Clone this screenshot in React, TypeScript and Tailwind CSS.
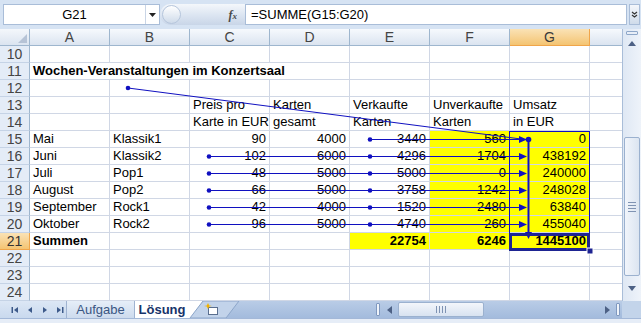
import React from 'react';

type Cell = { t?: string; r?: boolean; b?: boolean; y?: boolean; span?: boolean };

const n = (t: string, y = false): Cell => ({ t, r: true, y });
const s = (t: string): Cell => ({ t });

const rows: { num: number; cells: Cell[]; sel?: boolean }[] = [
  { num: 10, cells: [] },
  { num: 11, cells: [{ t: 'Wochen-Veranstaltungen im Konzertsaal', b: true, span: true }] },
  { num: 12, cells: [] },
  { num: 13, cells: [{}, {}, s('Preis pro'), s('Karten'), s('Verkaufte'), s('Unverkaufte'), s('Umsatz')] },
  { num: 14, cells: [{}, {}, s('Karte in EUR'), s('gesamt'), s('Karten'), s('Karten'), s('in EUR')] },
  { num: 15, cells: [s('Mai'), s('Klassik1'), n('90'), n('4000'), n('3440'), n('560', true), n('0', true)] },
  { num: 16, cells: [s('Juni'), s('Klassik2'), n('102'), n('6000'), n('4296'), n('1704', true), n('438192', true)] },
  { num: 17, cells: [s('Juli'), s('Pop1'), n('48'), n('5000'), n('5000'), n('0', true), n('240000', true)] },
  { num: 18, cells: [s('August'), s('Pop2'), n('66'), n('5000'), n('3758'), n('1242', true), n('248028', true)] },
  { num: 19, cells: [s('September'), s('Rock1'), n('42'), n('4000'), n('1520'), n('2480', true), n('63840', true)] },
  { num: 20, cells: [s('Oktober'), s('Rock2'), n('96'), n('5000'), n('4740'), n('260', true), n('455040', true)] },
  {
    num: 21,
    sel: true,
    cells: [
      { t: 'Summen', b: true },
      {},
      {},
      {},
      { t: '22754', r: true, b: true, y: true },
      { t: '6246', r: true, b: true, y: true },
      { t: '1445100', r: true, b: true, y: true },
    ],
  },
  { num: 22, cells: [] },
  { num: 23, cells: [] },
  { num: 24, cells: [] },
];

const cols = ['A', 'B', 'C', 'D', 'E', 'F', 'G'];

function GridCell({ c }: { c: Cell }) {
  return (
    <div
      className={`flex h-[17px] items-end whitespace-nowrap border-b border-r border-[#d0d7e5] px-[3px] pb-[1px] text-[13px] leading-[15px] text-black ${
        c.r ? 'justify-end' : 'justify-start'
      } ${c.b ? 'font-bold' : ''} ${c.y ? 'bg-[#ffff00]' : ''} ${c.span ? 'col-span-4' : ''}`}
    >
      {c.t}
    </div>
  );
}

function Arrows() {
  const blue = '#1010c0';
  const rowY = [139.5, 156.5, 173.5, 190.5, 207.5, 224.5];
  return (
    <svg className="pointer-events-none absolute left-0 top-0" width="641" height="323" viewBox="0 0 641 323">
      {/* precedent range box G15:G20 */}
      <rect x="509.5" y="131.5" width="80" height="102" fill="none" stroke={blue} strokeWidth="1" />
      {/* diagonal from B12 */}
      <line x1="128" y1="88" x2="521" y2="139" stroke={blue} strokeWidth="1" />
      <circle cx="128" cy="88" r="2.3" fill={blue} />
      {rowY.map((y, i) => (
        <g key={y}>
          <line x1={i === 0 ? 370 : 209} y1={y} x2="521" y2={y} stroke={blue} strokeWidth="1" />
          {i > 0 && <circle cx="209" cy={y} r="2.3" fill={blue} />}
          <circle cx="370" cy={y} r="2.3" fill={blue} />
          <polygon points={`519,${y - 3.5} 527,${y} 519,${y + 3.5}`} fill={blue} />
        </g>
      ))}
      {/* range arrow down to G21 */}
      <line x1="528.5" y1="139" x2="528.5" y2="234" stroke={blue} strokeWidth="2" />
      <circle cx="528.5" cy="139.5" r="2.8" fill={blue} />
      <polygon points="525,232 532,232 528.5,239" fill={blue} />
      {/* selected cell G21 */}
      <rect x="510.5" y="234.5" width="78" height="15" fill="none" stroke="#1e2492" strokeWidth="3" />
      <rect x="587" y="248" width="6" height="6" fill="#1e2492" stroke="#ffffff" strokeWidth="1" />
    </svg>
  );
}

function FormulaBar() {
  return (
    <div className="flex h-[29px] items-start bg-[#d6e3f3] pt-[4px]">
      <div className="ml-[3px] flex h-[21px] w-[157px] items-center border border-[#a9bdd8] bg-white">
        <div className="w-[141px] text-center text-[13px] text-black">G21</div>
        <div className="flex h-full flex-1 items-center justify-center border-l border-[#c9d5e6]">
          <svg width="7" height="4" viewBox="0 0 7 4">
            <polygon points="0,0 7,0 3.5,4" fill="#222" />
          </svg>
        </div>
      </div>
      <div className="relative flex h-[21px] w-[85px] items-center justify-end rounded-l-full bg-linear-to-b from-[#f4f7fb] via-[#dde6f2] to-[#c9d6e8] pr-[8px]">
        <div className="absolute left-[2px] top-[1px] h-[19px] w-[19px] rounded-full border border-[#b6c6dc] bg-linear-to-b from-[#ffffff] to-[#cfdbea]" />
        <span className="font-['Liberation_Serif',serif] text-[12px] italic font-bold text-[#4a4a4a]">
          f<span className="text-[9px]">x</span>
        </span>
      </div>
      <div className="flex h-[21px] w-[382px] items-center border border-[#a9bdd8] bg-white pl-[5px] text-[13px] text-black">
        =SUMME(G15:G20)
      </div>
      <div className="ml-[2px] flex h-[21px] w-[11px] items-center justify-center border border-[#a9bdd8] bg-linear-to-b from-[#f4f7fb] to-[#cfdbea]">
        <svg width="7" height="7" viewBox="0 0 7 7">
          <path d="M1 1 L3.5 3 L6 1 M1 4 L3.5 6 L6 4" stroke="#333" strokeWidth="1.2" fill="none" />
        </svg>
      </div>
    </div>
  );
}

function VScroll() {
  return (
    <div className="flex h-[272px] w-[19px] flex-col border-l border-[#a9bdd8] bg-linear-to-r from-[#dfe8f4] to-[#eef3fa]">
      <div className="mx-[3px] mt-[2px] h-[4px] rounded-[1px] border border-[#8ea7c9] bg-[#e8eef7]" />
      <div className="flex h-[16px] items-center justify-center">
        <svg width="8" height="5" viewBox="0 0 8 5">
          <polygon points="0,5 8,5 4,0" fill="#4d6185" />
        </svg>
      </div>
      <div className="h-[86px]" />
      <div className="mx-[1px] flex h-[139px] items-center justify-center rounded-[2px] border border-[#9bb1cf] bg-linear-to-r from-[#f1f5fb] to-[#dce5f1]">
        <div className="flex flex-col gap-[2px]">
          <div className="h-px w-[8px] bg-[#7f93b3]" />
          <div className="h-px w-[8px] bg-[#7f93b3]" />
          <div className="h-px w-[8px] bg-[#7f93b3]" />
          <div className="h-px w-[8px] bg-[#7f93b3]" />
        </div>
      </div>
      <div className="flex flex-1 items-center justify-center">
        <svg width="8" height="5" viewBox="0 0 8 5">
          <polygon points="0,0 8,0 4,5" fill="#4d6185" />
        </svg>
      </div>
    </div>
  );
}

function NavIcon({ kind }: { kind: 'first' | 'prev' | 'next' | 'last' }) {
  const c = '#3d5a8a';
  return (
    <svg width="8" height="8" viewBox="0 0 8 8">
      {kind === 'first' && (
        <>
          <rect x="0.5" y="1" width="1.5" height="6" fill={c} />
          <polygon points="7,1 7,7 3,4" fill={c} />
        </>
      )}
      {kind === 'prev' && <polygon points="6,1 6,7 2,4" fill={c} />}
      {kind === 'next' && <polygon points="2,1 2,7 6,4" fill={c} />}
      {kind === 'last' && (
        <>
          <polygon points="1,1 1,7 5,4" fill={c} />
          <rect x="6" y="1" width="1.5" height="6" fill={c} />
        </>
      )}
    </svg>
  );
}

function TabBar() {
  return (
    <div className="flex h-[17px] bg-linear-to-b from-[#b9cce6] to-[#a3bbdd]">
      <div className="flex w-[66px] items-center gap-[7px] bg-linear-to-b from-[#dce7f5] to-[#c9d9ee] pl-[11px]">
        <NavIcon kind="first" />
        <NavIcon kind="prev" />
        <NavIcon kind="next" />
        <NavIcon kind="last" />
      </div>
      <div className="flex w-[69px] items-center justify-center border-l border-r border-[#9fb3d1] bg-linear-to-b from-[#e6eef8] to-[#cddbee] text-[13px] text-[#3a5683]">
        Aufgabe
      </div>
      <div className="flex w-[54px] items-center justify-center bg-white text-[13px] font-bold text-[#16336a]">
        Lösung
      </div>
      <svg width="52" height="17" viewBox="0 0 52 17" className="shrink-0">
        <polygon points="0,0 0,17 37,17 50,0" fill="#c2d3ea" />
        <polygon points="0,17 14,0 50,0 37,17" fill="none" stroke="#8da6ca" strokeWidth="1" />
        <polygon points="-2,17 -2,0 14,0 1,17" fill="#ffffff" />
        <line x1="1" y1="17" x2="14" y2="0" stroke="#8da6ca" strokeWidth="1" />
        <rect x="19.5" y="6.5" width="9" height="7" fill="#ffffff" stroke="#5a6f8f" strokeWidth="1" />
        <polygon points="19,2 20.2,4.5 23,5 20.2,5.6 19,8 17.8,5.6 15,5 17.8,4.5" fill="#f2b200" />
      </svg>
      <div className="flex-1" />
      <div className="flex w-[247px] items-center">
        <div className="mx-[1px] h-[13px] w-[4px] rounded-[1px] border border-[#7f98bf] bg-[#eef3fa]" />
        <div className="flex w-[17px] items-center justify-center">
          <svg width="5" height="8" viewBox="0 0 5 8">
            <polygon points="5,0 5,8 0,4" fill="#4d6185" />
          </svg>
        </div>
        <div className="flex h-[15px] w-[86px] items-center justify-center gap-[2px] rounded-[2px] border border-[#9bb1cf] bg-linear-to-b from-[#f3f6fb] to-[#d8e2f0]">
          <div className="h-[7px] w-px bg-[#7f93b3]" />
          <div className="h-[7px] w-px bg-[#7f93b3]" />
          <div className="h-[7px] w-px bg-[#7f93b3]" />
          <div className="h-[7px] w-px bg-[#7f93b3]" />
        </div>
        <div className="flex-1" />
        <div className="flex w-[14px] items-center justify-center">
          <svg width="5" height="8" viewBox="0 0 5 8">
            <polygon points="0,0 0,8 5,4" fill="#4d6185" />
          </svg>
        </div>
        <div className="mx-[2px] h-[13px] w-[4px] rounded-[1px] border border-[#7f98bf] bg-[#eef3fa]" />
      </div>
      <div className="w-[19px] bg-[#c3d4ea]" />
    </div>
  );
}

export default function App() {
  return (
    <div className="relative h-[323px] w-[641px] overflow-hidden bg-white font-['Liberation_Sans',Arial,sans-serif]">
      <FormulaBar />
      <div className="flex">
        <div className="grid grid-cols-[30px_repeat(7,80px)_32px] auto-rows-[17px]">
          <div className="relative border-b border-r border-[#9eb6ce] bg-linear-to-b from-[#f4f7fb] to-[#dbe4f0]">
            <svg className="absolute bottom-[2px] right-[2px]" width="9" height="9" viewBox="0 0 9 9">
              <polygon points="9,0 9,9 0,9" fill="#b6c3d6" />
            </svg>
          </div>
          {cols.map((c) => (
            <div
              key={c}
              className={`flex items-center justify-center border-b border-r text-[14px] ${
                c === 'G'
                  ? 'border-[#f0a54a] bg-linear-to-b from-[#fae2b5] to-[#f4c471] text-[#3a3a3a]'
                  : 'border-[#9eb6ce] bg-linear-to-b from-[#f6f9fd] to-[#dbe4f0] text-[#444]'
              }`}
            >
              {c}
            </div>
          ))}
          <div className="border-b border-[#9eb6ce] bg-linear-to-b from-[#f6f9fd] to-[#dbe4f0]" />
          {rows.map((row) => {
            const cells: Cell[] = [];
            const spanned = row.cells[0]?.span;
            for (let i = 0; i < (spanned ? 4 : 7); i++) cells.push(row.cells[i] ?? {});
            return (
              <React.Fragment key={row.num}>
                <div
                  className={`flex items-center justify-center border-b border-r text-[14px] ${
                    row.sel
                      ? 'border-[#f0a54a] bg-linear-to-b from-[#fae2b5] to-[#f4c471] text-[#333]'
                      : 'border-[#c5d3e6] border-r-[#9eb6ce] bg-[#e4ecf7] text-[#444]'
                  }`}
                >
                  {row.num}
                </div>
                {cells.map((c, i) => (
                  <GridCell key={i} c={c} />
                ))}
                <div className="border-b border-[#d0d7e5]" />
              </React.Fragment>
            );
          })}
        </div>
        <VScroll />
      </div>
      <TabBar />
      <div className="h-[5px] border-t border-[#a3b8d8] bg-[#e6edf7]" />
      <Arrows />
    </div>
  );
}
